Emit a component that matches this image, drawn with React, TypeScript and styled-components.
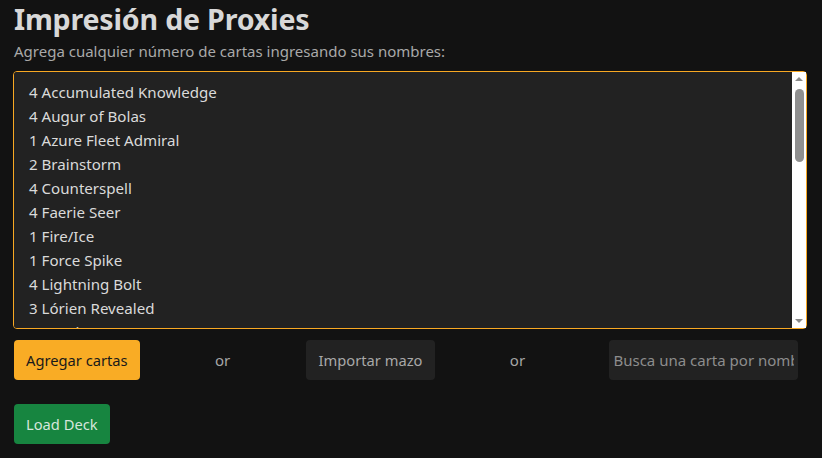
import React from "react";
import styled, { createGlobalStyle } from "styled-components";

const Global = createGlobalStyle`
  html, body { margin: 0; padding: 0; background: #121212; }
  body { font-family: "Noto Sans", "Open Sans", sans-serif; color: #dcdcdc; }
  * { box-sizing: border-box; }
`;

const Page = styled.div`
  padding: 0 14px;
  width: 822px;
  height: 458px;
  display: flex;
  flex-direction: column;
`;

const Title = styled.h1`
  margin: 1px 0 0 0;
  font-size: 28.6px;
  line-height: 36px;
  font-weight: 700;
  color: #d8d8d8;
  letter-spacing: -0.2px;
`;

const Subtitle = styled.p`
  margin: 3px 0 0 0;
  font-size: 15px;
  line-height: 22px;
  color: #a9a9a9;
`;

const DeckBox = styled.div`
  position: relative;
  margin: 9px 0 0 -1px;
  width: 794px;
  height: 258px;
`;

const Deck = styled.textarea`
  display: block;
  width: 100%;
  height: 100%;
  background: #222222;
  border: 1px solid #f8a823;
  border-radius: 4px;
  padding: 8px 30px 0 15px;
  color: #dadada;
  font-family: inherit;
  font-size: 15.1px;
  line-height: 24px;
  resize: none;
  outline: none;
  overflow-y: scroll;
  scrollbar-width: none;
  &::-webkit-scrollbar { display: none; }
`;

const ScrollTrack = styled.div`
  position: absolute;
  top: 1px;
  right: 1px;
  bottom: 1px;
  width: 14px;
  background: #ffffff;
  display: flex;
  flex-direction: column;
  align-items: center;
  pointer-events: none;
`;

const Arrow = styled.div<{ $down?: boolean }>`
  width: 0;
  height: 0;
  border-left: 4px solid transparent;
  border-right: 4px solid transparent;
  ${(p) =>
    p.$down
      ? "border-top: 4px solid #8a8a8a; margin-top: auto; margin-bottom: 5px;"
      : "border-bottom: 4px solid #8a8a8a; margin-top: 5px;"}
`;

const Thumb = styled.div`
  margin-top: 8px;
  width: 9px;
  height: 73px;
  border-radius: 5px;
  background: #8f8f8f;
`;

const Row = styled.div`
  display: flex;
  align-items: center;
  margin-top: 11px;
  height: 40px;
`;

const Button = styled.button<{ $variant: "primary" | "dark" | "success" }>`
  height: 40px;
  padding: 0 ${(p) => (p.$variant === "dark" ? 13 : 12)}px;
  border: none;
  border-radius: 4px;
  font-family: inherit;
  font-size: 14.7px;
  cursor: pointer;
  background: ${(p) =>
    p.$variant === "primary" ? "#f9ac25" : p.$variant === "success" ? "#178540" : "#222222"};
  color: ${(p) =>
    p.$variant === "primary" ? "#1a1a1a" : p.$variant === "success" ? "#d6e6dc" : "#a8a8a8"};
`;

const Or = styled.span<{ $w: number }>`
  width: ${(p) => p.$w}px;
  text-align: center;
  font-size: 15px;
  color: #a6a6a6;
`;

const Search = styled.input`
  margin-left: 10px;
  width: 189px;
  height: 40px;
  border: none;
  border-radius: 4px;
  background: #222222;
  padding: 0 4px;
  font-family: inherit;
  font-size: 15px;
  color: #ccc;
  outline: none;
  &::placeholder { color: #8d8d8d; }
`;

const LoadRow = styled.div`
  margin-top: 24px;
  display: flex;
`;

const deck = [
  "4 Accumulated Knowledge",
  "4 Augur of Bolas",
  "1 Azure Fleet Admiral",
  "2 Brainstorm",
  "4 Counterspell",
  "4 Faerie Seer",
  "1 Fire/Ice",
  "1 Force Spike",
  "4 Lightning Bolt",
  "3 Lórien Revealed",
  "2 Mystic Sanctuary",
  "4 Ponder",
  "4 Preordain",
  "2 Snap",
  "10 Island",
].join("\n");

export default function App() {
  return (
    <>
      <Global />
      <Page>
        <Title>Impresión de Proxies</Title>
        <Subtitle>Agrega cualquier número de cartas ingresando sus nombres:</Subtitle>
        <DeckBox>
          <Deck defaultValue={deck} />
          <ScrollTrack>
            <Arrow />
            <Thumb />
            <Arrow $down />
          </ScrollTrack>
        </DeckBox>
        <Row>
          <Button $variant="primary">Agregar cartas</Button>
          <Or $w={166}>or</Or>
          <Button $variant="dark">Importar mazo</Button>
          <Or $w={164}>or</Or>
          <Search placeholder="Busca una carta por nombre" />
        </Row>
        <LoadRow>
          <Button $variant="success">Load Deck</Button>
        </LoadRow>
      </Page>
    </>
  );
}
